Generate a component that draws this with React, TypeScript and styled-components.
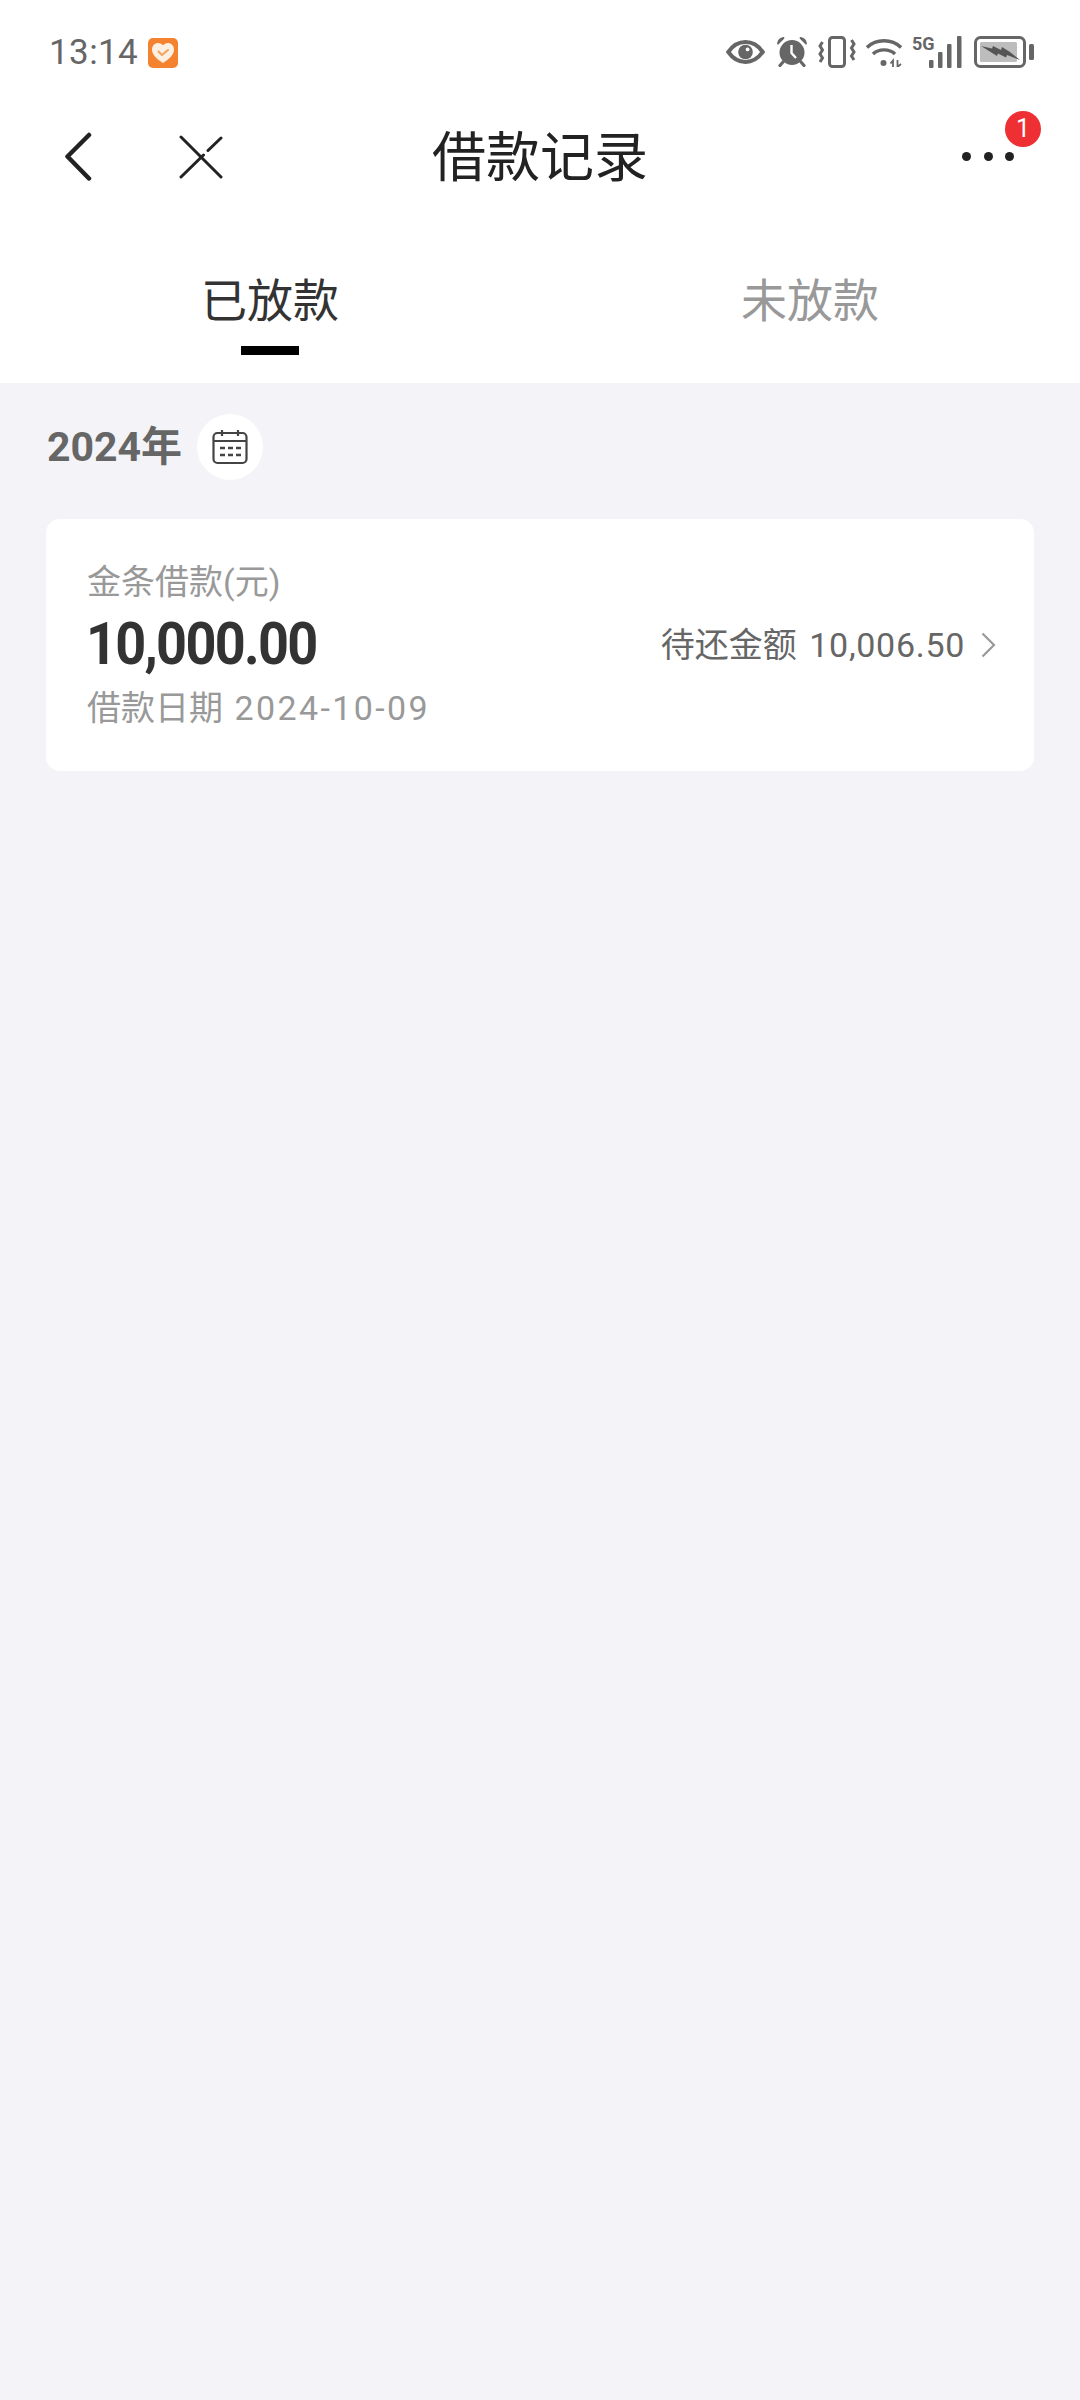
import React, {FC} from "react";
import styled, {createGlobalStyle} from "styled-components";

const GlobalStyle = createGlobalStyle`
    html, body {
        margin: 0;
        padding: 0;
        background: #f3f3f8;
    }
    * {
        box-sizing: border-box;
    }
`;

const FONT = `Roboto, "Noto Sans CJK SC", sans-serif`;

const Page = styled.div`
    width: 1080px;
    height: 2400px;
    display: flex;
    flex-direction: column;
    background: #f3f3f8;
    font-family: ${FONT};
`;

const Header = styled.header`
    background: #fff;
`;

const StatusBar = styled.div`
    height: 104px;
    padding: 0 46px 0 49px;
    display: flex;
    align-items: flex-start;
    justify-content: space-between;
`;

const StatusLeft = styled.div`
    display: flex;
    align-items: center;
    gap: 10px;
    margin-top: 36px;
`;

const Clock = styled.span`
    font-size: 35px;
    line-height: 34px;
    letter-spacing: 0.4px;
    color: #666;
`;

const StatusIcons = styled.div`
    display: flex;
    align-items: center;
    margin-top: 36px;
    height: 32px;
`;

const StatusIcon = styled.svg<{ $gap?: number }>`
    display: block;
    flex: none;
    margin-left: ${props => props.$gap ?? 0}px;
`;

const FiveG = styled.span`
    align-self: flex-start;
    margin-left: 10px;
    width: 17px;
    font-family: "Liberation Sans Narrow", Roboto, sans-serif;
    font-weight: 700;
    font-size: 18px;
    line-height: 15px;
    color: #666;
`;

const NavBar = styled.div`
    height: 105px;
    padding: 0 66px;
    display: grid;
    grid-template-columns: 1fr auto 1fr;
    align-items: center;
`;

const NavLeft = styled.div`
    display: flex;
    align-items: center;
    gap: 87px;
    margin-left: -2px;
`;

const Title = styled.h1`
    margin: 4px 0 0;
    font-size: 54px;
    line-height: 70px;
    font-weight: 400;
    color: #222;
`;

const More = styled.div`
    position: relative;
    justify-self: end;
    width: 52px;
    height: 10px;
    display: flex;
    align-items: center;
    justify-content: space-between;
`;

const Dot = styled.i`
    display: block;
    width: 9px;
    height: 9px;
    border-radius: 50%;
    background: #222;
`;

const Badge = styled.span`
    position: absolute;
    right: -27px;
    top: -41px;
    width: 36px;
    height: 36px;
    border-radius: 50%;
    background: #ee2f33;
    color: #fff;
    font-size: 25px;
    line-height: 36px;
    text-align: center;
`;

const Tabs = styled.nav`
    height: 174px;
    padding-top: 64px;
    display: grid;
    grid-template-columns: 1fr 1fr;
    align-items: start;
`;

const Tab = styled.div<{ $active?: boolean }>`
    display: flex;
    flex-direction: column;
    align-items: center;
    font-size: 46px;
    line-height: 56px;
    color: ${props => (props.$active ? "#333" : "#999")};

    &::after {
        content: "";
        display: block;
        width: 58px;
        height: 9px;
        margin-top: 17px;
        background: ${props => (props.$active ? "#000" : "transparent")};
    }
`;

const Content = styled.main`
    padding: 31px 46px 0;
    display: flex;
    flex-direction: column;
    gap: 39px;
`;

const YearRow = styled.div`
    display: flex;
    align-items: center;
    gap: 15px;
    padding-left: 1px;
`;

const Year = styled.span`
    font-size: 41px;
    line-height: 50px;
    font-weight: 700;
    color: #666;
`;

const CalendarButton = styled.div`
    width: 66px;
    height: 66px;
    border-radius: 50%;
    background: #fff;
    display: flex;
    align-items: center;
    justify-content: center;
`;

const Card = styled.section`
    height: 252px;
    padding: 0 38px 0 41px;
    background: #fff;
    border-radius: 14px;
    display: flex;
    align-items: center;
    justify-content: space-between;
`;

const CardLeft = styled.div`
    display: flex;
    flex-direction: column;
`;

const Label = styled.div`
    font-size: 34px;
    line-height: 46px;
    color: #999;
`;

const Amount = styled.div`
    margin-top: 6px;
    margin-left: -1px;
    font-size: 60px;
    line-height: 66px;
    font-weight: 700;
    letter-spacing: -1.9px;
    color: #333;
    transform: scaleX(0.9);
    transform-origin: left center;
`;

const DateLine = styled.div`
    margin-top: 8px;
    font-size: 34px;
    line-height: 46px;
    word-spacing: 3px;
    color: #999;
`;

const Digits = styled.span`
    letter-spacing: 2.4px;
`;

const CardRight = styled.div`
    display: flex;
    align-items: center;
    gap: 16px;
    font-size: 34px;
    line-height: 46px;
    word-spacing: 4px;
    color: #666;
`;

const Sum = styled.span`
    letter-spacing: 0.7px;
`;

const EyeIcon: FC = () => (
    <StatusIcon width={39} height={24} viewBox="0 0 37 23">
        <path d="M2 11.500C6.500 5 12 2 18.500 2S30.500 5 35 11.500C30.500 18 25 21 18.500 21S6.500 18 2 11.500Z" fill="none" stroke="#666" strokeWidth={3.800} />
        <circle cx={18.500} cy={11.500} r={7} fill="#666" />
        <circle cx={20.500} cy={9} r={1.800} fill="#fff" />
    </StatusIcon>
);

const AlarmIcon: FC = () => (
    <StatusIcon $gap={12} width={30} height={30} viewBox="0 0 30 30">
        <circle cx={15} cy={15.500} r={12.500} fill="#666" />
        <path d="M14.500 8V16L19 21" fill="none" stroke="#fff" strokeWidth={2.400} />
        <path d="M1 6.500C1.500 3.500 3.500 1.500 6.500 1ZM29 6.500C28.500 3.500 26.500 1.500 23.500 1Z" fill="#666" stroke="#666" strokeWidth={1.800} strokeLinejoin="round" />
        <path d="M6 25L3 28.500M24 25L27 28.500" stroke="#666" strokeWidth={3.200} strokeLinecap="round" />
    </StatusIcon>
);

const VibrateIcon: FC = () => (
    <StatusIcon $gap={11} width={38} height={32} viewBox="0 0 38 32">
        <rect x={11.500} y={1.500} width={15} height={29} rx={3} fill="none" stroke="#666" strokeWidth={3} />
        <path d="M4.500 6L2 10L4.500 14L2 18L4.500 22L2 26M33.500 4L36 8L33.500 12L36 16L33.500 20L36 24" fill="none" stroke="#666" strokeWidth={3} />
    </StatusIcon>
);

const WifiIcon: FC = () => (
    <StatusIcon $gap={10} width={36} height={30} viewBox="0 0 36 30">
        <path d="M1 10.500C10 1.500 26 1.500 35 10.500" fill="none" stroke="#666" strokeWidth={3.400} />
        <path d="M7 17C12.500 11.500 23.500 11.500 29 17" fill="none" stroke="#666" strokeWidth={3.400} />
        <circle cx={17.500} cy={26} r={3} fill="#666" />
        <path d="M27 30V23.500L24.500 26.500M31.500 23V30L35 27" fill="none" stroke="#666" strokeWidth={1.800} />
    </StatusIcon>
);

const SignalIcon: FC = () => (
    <StatusIcon width={33} height={32} viewBox="0 0 33 32">
        <rect x={0} y={24} width={4.500} height={8} rx={1} fill="#666" />
        <rect x={9} y={16} width={4.500} height={16} rx={1} fill="#666" />
        <rect x={18} y={8} width={4.500} height={24} rx={1} fill="#666" />
        <rect x={28} y={0} width={4.500} height={32} rx={1} fill="#666" />
    </StatusIcon>
);

const BatteryIcon: FC = () => (
    <StatusIcon $gap={12} width={60} height={32} viewBox="0 0 60 32">
        <rect x={1.500} y={1.500} width={49} height={29} rx={5} fill="none" stroke="#666" strokeWidth={3} />
        <rect x={6} y={6} width={37} height={20} rx={1.500} fill="#bdbdbd" />
        <path d="M7 10L18 12.500L19 10L27 14L28 11L36 16L46 24L33 19L32 21.500L24 17.500L23 20L15 15Z" fill="#555" />
        <rect x={55} y={8} width={5} height={16} rx={1.500} fill="#666" />
    </StatusIcon>
);

const AppIcon: FC = () => (
    <svg width={30} height={30} viewBox="0 0 30 30">
        <rect width={30} height={30} rx={5} fill="#f5822e" />
        <path d="M15 25C8 20.500 4 16.500 4 11.500C4 7.500 7 5 10.200 5C12.300 5 14 6 15 7.500C16 6 17.700 5 19.800 5C23 5 26 7.500 26 11.500C26 16.500 22 20.500 15 25Z" fill="#fdf0e2" />
        <path d="M10.500 13.500L14 17L20 12" fill="none" stroke="#f3a564" strokeWidth={2.200} strokeLinecap="round" strokeLinejoin="round" />
    </svg>
);

const BackIcon: FC = () => (
    <svg width={28} height={50} viewBox="0 0 28 50" style={{display: "block"}}>
        <path d="M25 3L3.500 24.500L25 46.500" fill="none" stroke="#222" strokeWidth={4.500} strokeLinecap="round" strokeLinejoin="round" />
    </svg>
);

const CloseIcon: FC = () => (
    <svg width={44} height={44} viewBox="0 0 44 44" style={{display: "block"}}>
        <path d="M2 2L42 42M2 42L24.500 20M29 15.500L42 3" fill="none" stroke="#222" strokeWidth={3} strokeLinecap="round" />
    </svg>
);

const CalendarIcon: FC = () => (
    <svg width={36} height={36} viewBox="0 0 36 36">
        <rect x={1.500} y={4} width={33} height={30} rx={4} fill="none" stroke="#444" strokeWidth={2.200} />
        <path d="M2 12H34M10 1V7M26 1V7" fill="none" stroke="#444" strokeWidth={2.200} />
        <path d="M8 19H13M16 19H21M24 19H29M8 26H13M16 26H21M24 26H29" fill="none" stroke="#444" strokeWidth={2.400} />
    </svg>
);

const ChevronIcon: FC = () => (
    <svg width={15} height={26} viewBox="0 0 15 26">
        <path d="M1.500 1.500L13 13L1.500 24.500" fill="none" stroke="#999" strokeWidth={2.200} />
    </svg>
);

export default function App() {
    return (
        <Page>
            <GlobalStyle />
            <Header>
                <StatusBar>
                    <StatusLeft>
                        <Clock>13:14</Clock>
                        <AppIcon />
                    </StatusLeft>
                    <StatusIcons>
                        <EyeIcon />
                        <AlarmIcon />
                        <VibrateIcon />
                        <WifiIcon />
                        <FiveG>5G</FiveG>
                        <SignalIcon />
                        <BatteryIcon />
                    </StatusIcons>
                </StatusBar>
                <NavBar>
                    <NavLeft>
                        <BackIcon />
                        <CloseIcon />
                    </NavLeft>
                    <Title>借款记录</Title>
                    <More>
                        <Dot />
                        <Dot />
                        <Dot />
                        <Badge>1</Badge>
                    </More>
                </NavBar>
                <Tabs>
                    <Tab $active>已放款</Tab>
                    <Tab>未放款</Tab>
                </Tabs>
            </Header>
            <Content>
                <YearRow>
                    <Year>2024年</Year>
                    <CalendarButton>
                        <CalendarIcon />
                    </CalendarButton>
                </YearRow>
                <Card>
                    <CardLeft>
                        <Label>金条借款(元)</Label>
                        <Amount>10,000.00</Amount>
                        <DateLine>借款日期 <Digits>2024-10-09</Digits></DateLine>
                    </CardLeft>
                    <CardRight>
                        <span>待还金额 <Sum>10,006.50</Sum></span>
                        <ChevronIcon />
                    </CardRight>
                </Card>
            </Content>
        </Page>
    );
}
